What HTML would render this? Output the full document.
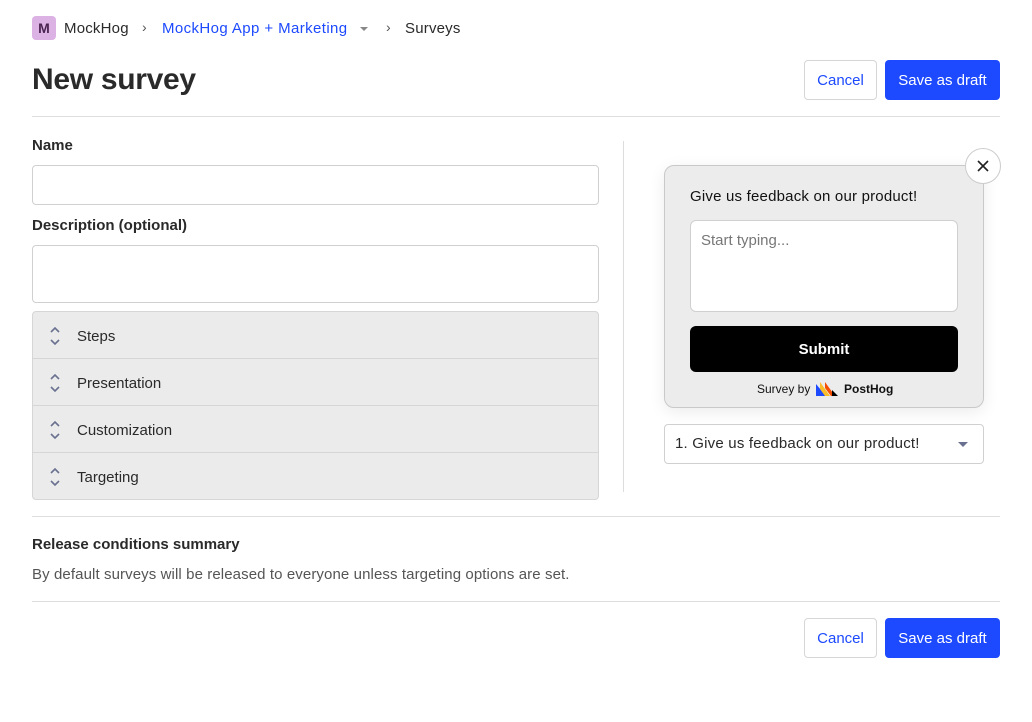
<!DOCTYPE html>
<html><head><style>
*{box-sizing:border-box;margin:0;padding:0}
body{width:1032px;height:722px;background:#fff;font-family:"Liberation Sans",sans-serif;color:#2a2a2a;position:relative;overflow:hidden}
.a{position:absolute}
.btn{position:absolute;height:40px;border-radius:4px;font-size:15px;display:flex;align-items:center;justify-content:center;padding-top:1px}
.cancel{border:1px solid #d6d6d6;color:#1d4aff;background:#fff;width:73px}
.save{background:#1d4aff;color:#fff;width:115px}
.lbl{font-size:15px;font-weight:bold}
.inp{border:1px solid #d0d0d0;border-radius:4px;background:#fff}
.hr{position:absolute;left:32px;width:968px;height:1px;background:#ddd}
.row{height:47px;border-bottom:1px solid #d6d6d6;display:flex;align-items:center;font-size:15px;padding-left:44px;padding-top:2px;position:relative}
.row:last-child{border-bottom:none}
.row svg{position:absolute;left:16px;top:14px}
</style></head><body>
<div class="a" style="left:32px;top:16px;width:24px;height:24px;background:#dcb1e3;border-radius:4px;font-size:14px;font-weight:bold;color:#4a2450;text-align:center;line-height:24px">M</div>
<div class="a" style="left:64px;top:20px;font-size:15px;letter-spacing:0.2px">MockHog</div>
<div class="a" style="left:142px;top:19px;font-size:14px;color:#555">›</div>
<div class="a" style="left:162px;top:20px;font-size:15px;color:#1d4aff;letter-spacing:0.4px">MockHog App + Marketing</div>
<div class="a" style="left:360px;top:27px;width:0;height:0;border-left:4px solid transparent;border-right:4px solid transparent;border-top:4px solid #888"></div>
<div class="a" style="left:386px;top:19px;font-size:14px;color:#555">›</div>
<div class="a" style="left:405px;top:20px;font-size:15px;letter-spacing:0.2px">Surveys</div>
<div class="a" style="left:32px;top:63px;font-size:30px;font-weight:bold;letter-spacing:-0.3px">New survey</div>
<div class="btn cancel" style="left:804px;top:60px">Cancel</div>
<div class="btn save" style="left:885px;top:60px">Save as draft</div>
<div class="hr" style="top:116px"></div>
<div class="a lbl" style="left:32px;top:137px">Name</div>
<div class="a inp" style="left:32px;top:165px;width:567px;height:40px"></div>
<div class="a lbl" style="left:32px;top:217px">Description (optional)</div>
<div class="a inp" style="left:32px;top:245px;width:567px;height:58px"></div>
<div class="a" style="left:32px;top:311px;width:567px;height:189px;border:1px solid #d6d6d6;border-radius:4px;background:#ebebeb">
<div class="row"><svg width="12" height="20" viewBox="0 0 12 20"><path d="M2 6l4-4 4 4M2 14l4 4 4-4" stroke="#6a7090" stroke-width="1.6" fill="none"/></svg>Steps</div>
<div class="row"><svg width="12" height="20" viewBox="0 0 12 20"><path d="M2 6l4-4 4 4M2 14l4 4 4-4" stroke="#6a7090" stroke-width="1.6" fill="none"/></svg>Presentation</div>
<div class="row"><svg width="12" height="20" viewBox="0 0 12 20"><path d="M2 6l4-4 4 4M2 14l4 4 4-4" stroke="#6a7090" stroke-width="1.6" fill="none"/></svg>Customization</div>
<div class="row"><svg width="12" height="20" viewBox="0 0 12 20"><path d="M2 6l4-4 4 4M2 14l4 4 4-4" stroke="#6a7090" stroke-width="1.6" fill="none"/></svg>Targeting</div>
</div>
<div class="a" style="left:623px;top:141px;width:1px;height:351px;background:#ddd"></div>
<div class="a" style="left:664px;top:165px;width:320px;height:243px;background:#ececec;border:1px solid #c9c9c9;border-radius:10px;box-shadow:0 4px 16px rgba(0,0,0,.08)"></div>
<div class="a" style="left:965px;top:148px;width:36px;height:36px;border-radius:50%;background:#fff;border:1px solid #ccc"><svg width="34" height="34" viewBox="0 0 34 34"><path d="M12 12l10 10M22 12l-10 10" stroke="#222" stroke-width="1.6"/></svg></div>
<div class="a" style="left:690px;top:188px;font-size:15px;color:#111;letter-spacing:0.2px">Give us feedback on our product!</div>
<div class="a inp" style="left:690px;top:220px;width:268px;height:92px;border-radius:6px;padding:11px 10px;font-size:15px;color:#777">Start typing...</div>
<div class="a" style="left:690px;top:326px;width:268px;height:46px;background:#000;border-radius:6px;color:#fff;font-weight:bold;font-size:15px;display:flex;align-items:center;justify-content:center">Submit</div>
<div class="a" style="left:757px;top:382px;font-size:12px;color:#111">Survey by</div>
<svg class="a" style="left:816px;top:382px" width="24" height="14" viewBox="0 0 24 14"><path d="M0 2l10 12H0z" fill="#1d4aff"/><path d="M4 0l10 14H9L4 7z" fill="#f9bd2b"/><path d="M9 0l10 14h-4L9 6z" fill="#f54e00"/><path d="M16 8l6 6h-6z" fill="#000"/></svg>
<div class="a" style="left:844px;top:382px;font-size:12px;font-weight:bold;color:#111">PostHog</div>
<div class="a inp" style="left:664px;top:424px;width:320px;height:40px;font-size:15px;padding:10px 10px;letter-spacing:0.2px">1. Give us feedback on our product!</div>
<div class="a" style="left:958px;top:442px;width:0;height:0;border-left:5px solid transparent;border-right:5px solid transparent;border-top:5px solid #6a7090"></div>
<div class="hr" style="top:516px"></div>
<div class="a lbl" style="left:32px;top:536px">Release conditions summary</div>
<div class="a" style="left:32px;top:566px;font-size:15px;color:#555;letter-spacing:0.1px">By default surveys will be released to everyone unless targeting options are set.</div>
<div class="hr" style="top:601px"></div>
<div class="btn cancel" style="left:804px;top:618px">Cancel</div>
<div class="btn save" style="left:885px;top:618px">Save as draft</div>
</body></html>
